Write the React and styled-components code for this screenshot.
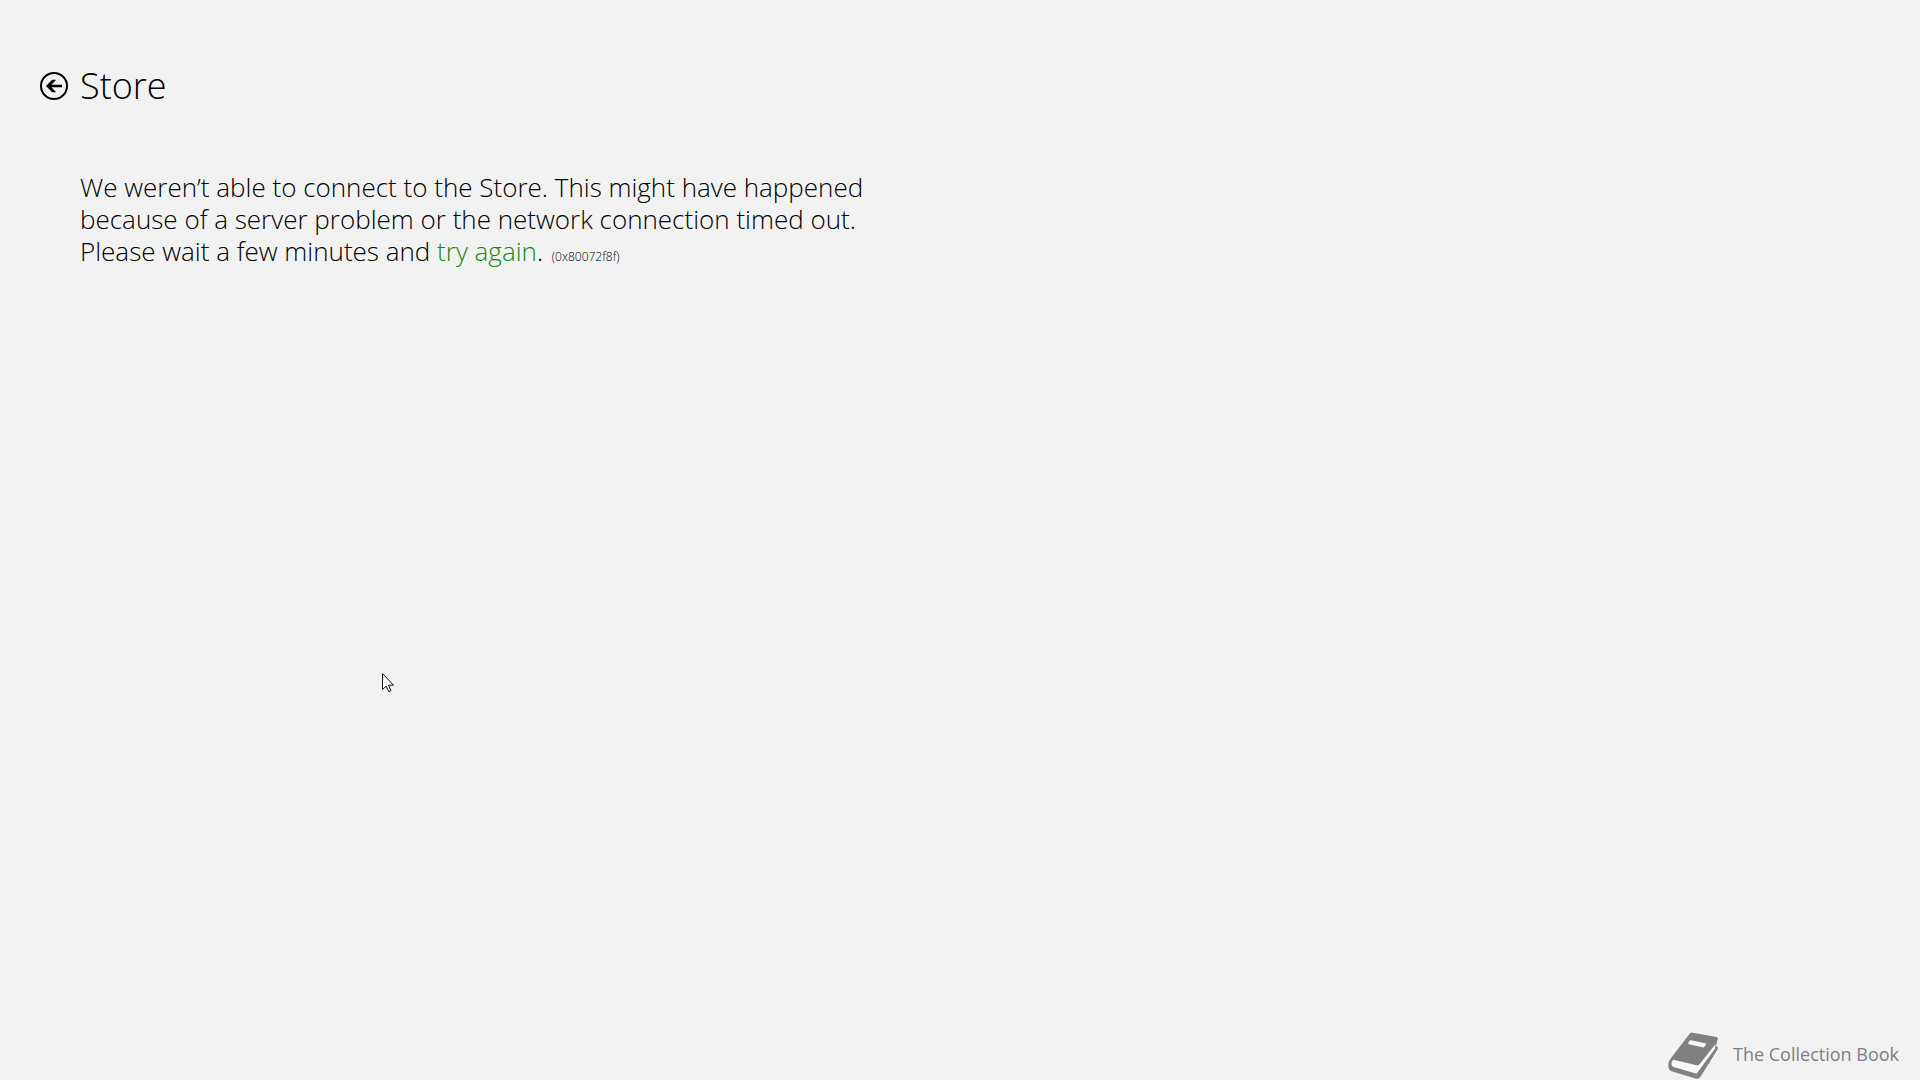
import * as React from 'react';
import styled, { createGlobalStyle } from 'styled-components';

const GlobalStyle = createGlobalStyle`
  body {
    margin: 0;
    background: #f2f2f2;
    color: #000;
    font-family: 'Open Sans', 'Noto Sans', sans-serif;
    font-weight: 300;
  }
`;

const Page = styled.div`
  display: flex;
  flex-direction: column;
  box-sizing: border-box;
  min-height: 100vh;
  padding: 62px 21px 0 40px;
`;

const Header = styled.header`
  display: flex;
  align-items: center;
  gap: 12px;
`;

const BackButton = styled.button`
  display: flex;
  padding: 0;
  border: 0;
  background: none;
  color: inherit;
  cursor: pointer;
`;

const Title = styled.h1`
  margin: 0;
  font-size: 36px;
  line-height: 48px;
  font-weight: 300;
`;

const Message = styled.main`
  flex: 1;
  max-width: 800px;
  margin-top: 61px;
  padding-left: 40px;
`;

const MessageText = styled.p`
  margin: 0;
  font-size: 26px;
  line-height: 32px;
`;

const RetryLink = styled.a`
  color: #128a12;
  text-decoration: none;
`;

const ErrorCode = styled.small`
  margin-left: 2px;
  font-size: 12px;
`;

const Footer = styled.footer`
  display: flex;
  align-items: flex-start;
  justify-content: flex-end;
  gap: 14px;
  color: #808080;
  font-size: 18px;
  line-height: 44px;
  font-weight: 400;
`;

const Pointer = styled.svg`
  position: absolute;
  left: 381px;
  top: 672px;
  pointer-events: none;
`;

function BackIcon() {
  return (
    <svg width="28" height="28" viewBox="0 0 28 28" fill="none" aria-hidden="true">
      <circle cx="14" cy="14" r="13" stroke="currentColor" strokeWidth="2" />
      <path d="M6 14l6.2-6.2h4l-4.8 4.9H22v2.6H11.4l4.8 4.9h-4z" fill="currentColor" />
    </svg>
  );
}

function BookIcon() {
  return (
    <svg width="51" height="48" viewBox="27 33 153 144" aria-hidden="true">
      <path
        d="M92 38q4-4 9-3l72 13q6 2 3 8l-5 18q7 2 5 11l-52 83q-4 7-12 5L38 151q-10-4-10-17-1-11 6-20z"
        fill="#808080"
      />
      <path
        d="M44 116l69 17q6 1 9-4l47-59v12l-53 72q-3 5-8 3l-64-19q-9-4-6-15 1-5 6-7z"
        fill="#f8f8f8"
      />
      <path d="M91 60q2-2 5-2l43 9q4 2 1 5l-4 6q-2 2-5 1l-41-9q-4-1-2-5z" fill="#f8f8f8" />
    </svg>
  );
}

export default function App() {
  return (
    <>
      <GlobalStyle />
      <Page>
        <Header>
          <BackButton type="button" aria-label="Back">
            <BackIcon />
          </BackButton>
          <Title>Store</Title>
        </Header>
        <Message>
          <MessageText>
            We weren’t able to connect to the Store. This might have happened
            because of a server problem or the network connection timed out.
            Please wait a few minutes and <RetryLink href="#retry">try again</RetryLink>.{' '}
            <ErrorCode>(0x80072f8f)</ErrorCode>
          </MessageText>
        </Message>
        <Footer>
          <BookIcon />
          <span>The Collection Book</span>
        </Footer>
      </Page>
      <Pointer width="14" height="21" viewBox="0 0 14 21" aria-hidden="true">
        <path
          d="M1.5 1.5v16l3.6-3.4 2.7 5.5 2.2-1-2.6-5.4h5z"
          fill="#fff"
          stroke="#111"
          strokeWidth="1"
        />
      </Pointer>
    </>
  );
}
